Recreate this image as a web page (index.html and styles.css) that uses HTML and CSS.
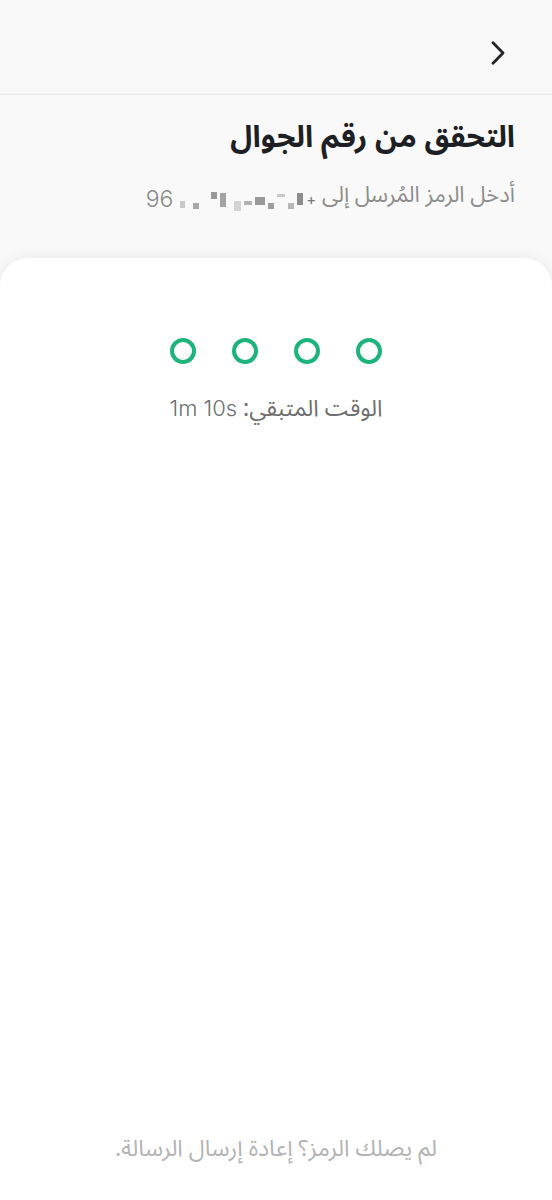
FILE: index.html
```html
<!DOCTYPE html>
<html lang="ar" dir="rtl">
<head>
    <meta charset="utf-8">
    <title>التحقق من رقم الجوال</title>
    <link rel="stylesheet" href="styles.css">
</head>
<body>
    <div class="page">
        <header class="topbar">
            <a class="back" href="#" aria-label="رجوع">
                <svg width="24" height="24" viewBox="0 0 24 24" fill="none" stroke="#23252a" stroke-width="2.8" stroke-linecap="round" stroke-linejoin="round">
                    <path d="M7 1.8 L17 12 L7 22.2"/>
                </svg>
            </a>
        </header>

        <section class="intro">
            <h1 class="title">التحقق من رقم الجوال</h1>
            <p class="subtitle">
                أدخل الرمز المُرسل إلى
                <span class="phone">
                    <span class="plus">+</span>
                    <span class="px px-a"></span>
                    <span class="px px-b"></span>
                    <span class="px px-c"></span>
                    <span class="px px-d"></span>
                    <span class="px px-e"></span>
                    <span class="px px-f"></span>
                    <span class="px px-g"></span>
                    <span class="px px-h"></span>
                    <span class="px px-i"></span>
                    <span class="px px-j"></span>
                    <span class="px px-k"></span>
                    <span class="digits">96</span>
                </span>
            </p>
        </section>

        <main class="card">
            <div class="otp">
                <span class="dot"></span>
                <span class="dot"></span>
                <span class="dot"></span>
                <span class="dot"></span>
            </div>
            <p class="timer">الوقت المتبقي: <span class="time" dir="ltr">1m 10s</span></p>

            <p class="resend">لم يصلك الرمز؟ إعادة إرسال الرسالة.</p>
        </main>
    </div>
</body>
</html>
```

FILE: styles.css
```css
/* General styling */
* {
    box-sizing: border-box;
}

body {
    margin: 0;
    padding: 0;
    background-color: #f9f9f9;
    font-family: "Noto Sans Arabic", "DejaVu Sans", sans-serif;
    color: #1f2126;
}

.page {
    min-height: 1200px;
    display: flex;
    flex-direction: column;
}

/* Top bar */
.topbar {
    height: 95px;
    border-bottom: 1px solid #e7e7e7;
    display: flex;
    align-items: center;
    padding: 0 42px;
}

.back {
    display: flex;
    width: 24px;
    height: 24px;
    margin-top: 12px;
}

/* Heading */
.intro {
    padding: 23px 37px 0;
    height: 163px;
}

.title {
    margin: 0;
    font-size: 30px;
    font-weight: bold;
    line-height: 40px;
    color: #1d1f24;
}

.subtitle {
    margin: 22px 0 0;
    font-size: 22px;
    line-height: 30px;
    color: #8d8d8d;
}

.phone {
    display: inline-flex;
    align-items: flex-end;
    gap: 3px;
    vertical-align: -3px;
}

.plus {
    font-family: "Inter", sans-serif;
    font-size: 15px;
    line-height: 22px;
    color: #777;
}

.digits {
    font-family: "Inter", sans-serif;
    font-weight: 300;
    font-size: 23px;
    line-height: 24px;
    color: #8a8a8a;
}

.px {
    display: inline-block;
    width: 6px;
    height: 6px;
    background-color: #a9a9a9;
    margin-bottom: 2px;
}

.px-a { height: 12px; width: 6px; background-color: #8e8e8e; margin-bottom: 6px; }
.px-b { background-color: #b8b8b8; margin-bottom: 2px; }
.px-c { background-color: #c9c9c9; width: 8px; margin-bottom: 14px; height: 3px; }
.px-d { background-color: #a0a0a0; }
.px-e { width: 10px; height: 8px; background-color: #999; margin-bottom: 6px; }
.px-f { width: 8px; height: 4px; background-color: #b1b1b1; margin-bottom: 6px; }
.px-g { width: 7px; height: 10px; background-color: #d3d3d3; margin-bottom: 0; margin-left: 5px; }
.px-h { width: 6px; height: 14px; background-color: #a3a3a3; margin-bottom: 4px; }
.px-i { width: 6px; height: 7px; background-color: #999; margin-bottom: 12px; margin-left: 9px; }
.px-j { background-color: #a7a7a7; margin-left: 5px; }
.px-k { width: 5px; height: 7px; background-color: #c9c9c9; margin-bottom: 3px; margin-left: 4px; }

/* Card */
.card {
    flex: 1;
    background-color: #ffffff;
    border-radius: 28px 28px 0 0;
    box-shadow: 0 -2px 12px rgba(0, 0, 0, 0.06);
    display: flex;
    flex-direction: column;
    align-items: center;
    padding: 80px 20px 34px;
}

.otp {
    display: flex;
    direction: ltr;
    gap: 36px;
}

.dot {
    width: 26px;
    height: 26px;
    border: 4px solid #1db47c;
    border-radius: 50%;
}

.timer {
    margin: 27px 0 0;
    font-size: 23px;
    line-height: 34px;
    color: #6f6f6f;
}

.time {
    font-family: "Inter", sans-serif;
    font-weight: 300;
    font-size: 22px;
}

.resend {
    margin: auto 0 0;
    font-size: 23px;
    line-height: 34px;
    color: #b3b3b3;
}
```
